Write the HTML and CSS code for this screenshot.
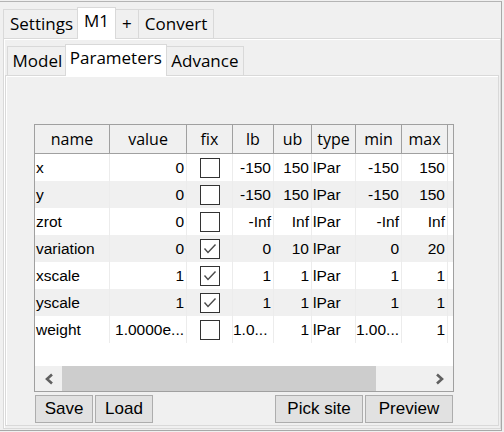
FILE: index.html
```html
<!DOCTYPE html>
<html>
<head>
<meta charset="utf-8">
<link rel="stylesheet" href="styles.css">
</head>
<body>
<div class="frame">
  <div class="tabbar">
    <div class="tab">Settings</div>
    <div class="tab sel">M1</div>
    <div class="tab">+</div>
    <div class="tab">Convert</div>
  </div>
  <div class="panel">
    <div class="tabbar inner">
      <div class="tab">Model</div>
      <div class="tab sel">Parameters</div>
      <div class="tab">Advance</div>
    </div>
    <div class="pane">
      <div class="table">
        <div class="row head">
          <div class="c">name</div><div class="c">value</div><div class="c">fix</div><div class="c">lb</div><div class="c">ub</div><div class="c">type</div><div class="c">min</div><div class="c">max</div><div class="c"></div>
        </div>
        <div class="row">
          <div class="c l">x</div><div class="c r">0</div><div class="c"><span class="cb"></span></div><div class="c r">-150</div><div class="c r">150</div><div class="c l">lPar</div><div class="c r">-150</div><div class="c r">150</div><div class="c"></div>
        </div>
        <div class="row alt">
          <div class="c l">y</div><div class="c r">0</div><div class="c"><span class="cb"></span></div><div class="c r">-150</div><div class="c r">150</div><div class="c l">lPar</div><div class="c r">-150</div><div class="c r">150</div><div class="c"></div>
        </div>
        <div class="row">
          <div class="c l">zrot</div><div class="c r">0</div><div class="c"><span class="cb"></span></div><div class="c r">-Inf</div><div class="c r">Inf</div><div class="c l">lPar</div><div class="c r">-Inf</div><div class="c r">Inf</div><div class="c"></div>
        </div>
        <div class="row alt">
          <div class="c l">variation</div><div class="c r">0</div><div class="c"><span class="cb"><svg viewBox="0 0 18 18" width="18" height="18"><polyline points="3.5,8.5 7,12.5 14.5,4.5" fill="none" stroke="#4a4a4a" stroke-width="1.4"/></svg></span></div><div class="c r">0</div><div class="c r">10</div><div class="c l">lPar</div><div class="c r">0</div><div class="c r">20</div><div class="c"></div>
        </div>
        <div class="row">
          <div class="c l">xscale</div><div class="c r">1</div><div class="c"><span class="cb"><svg viewBox="0 0 18 18" width="18" height="18"><polyline points="3.5,8.5 7,12.5 14.5,4.5" fill="none" stroke="#4a4a4a" stroke-width="1.4"/></svg></span></div><div class="c r">1</div><div class="c r">1</div><div class="c l">lPar</div><div class="c r">1</div><div class="c r">1</div><div class="c"></div>
        </div>
        <div class="row alt">
          <div class="c l">yscale</div><div class="c r">1</div><div class="c"><span class="cb"><svg viewBox="0 0 18 18" width="18" height="18"><polyline points="3.5,8.5 7,12.5 14.5,4.5" fill="none" stroke="#4a4a4a" stroke-width="1.4"/></svg></span></div><div class="c r">1</div><div class="c r">1</div><div class="c l">lPar</div><div class="c r">1</div><div class="c r">1</div><div class="c"></div>
        </div>
        <div class="row">
          <div class="c l">weight</div><div class="c r">1.0000e...</div><div class="c"><span class="cb"></span></div><div class="c l0">1.0...</div><div class="c r">1</div><div class="c l">lPar</div><div class="c r">1.00...</div><div class="c r">1</div><div class="c"></div>
        </div>
        <div class="filler"></div>
        <div class="hscroll">
          <div class="arrow"><svg viewBox="0 0 10 12" width="10" height="12"><polyline points="8,1.5 3,6 8,10.5" fill="none" stroke="#606060" stroke-width="2.6"/></svg></div>
          <div class="thumb"></div>
          <div class="trough"></div>
          <div class="arrow"><svg viewBox="0 0 10 12" width="10" height="12"><polyline points="2,1.5 7,6 2,10.5" fill="none" stroke="#606060" stroke-width="2.6"/></svg></div>
        </div>
      </div>
      <div class="buttons">
        <div class="btn small">Save</div>
        <div class="btn small">Load</div>
        <div class="spacer"></div>
        <div class="btn wide">Pick site</div>
        <div class="btn wide">Preview</div>
      </div>
    </div>
  </div>
</div>
</body>
</html>
```
FILE: styles.css
```css
html, body {
  margin: 0;
  padding: 0;
  width: 504px;
  height: 432px;
  overflow: hidden;
  background: #f0f0f0;
}

.frame {
  box-sizing: border-box;
  width: 502px;
  height: 430px;
  margin-top: 1px;
  border-top: 1px solid #b4b4b4;
  border-right: 1px solid #a8a8a8;
  border-bottom: 1px solid #a8a8a8;
  padding: 0 0 1px 3px;
  display: flex;
  flex-direction: column;
}

.tabbar {
  display: flex;
  align-items: flex-end;
  height: 36px;
  position: relative;
  z-index: 1;
  font-family: "Open Sans", "DejaVu Sans", sans-serif;
  font-size: 17px;
  color: #000;
}

.tab {
  box-sizing: border-box;
  height: 29px;
  line-height: 27px;
  padding: 0 6px;
  border: 1px solid #d9d9d9;
  border-bottom: none;
  background: #f0f0f0;
  margin-right: -1px;
}

.tab.sel {
  height: 32px;
  line-height: 26px;
  padding: 0 6px;
  background: #fff;
  margin: 0 -1px -1px -2px;
  position: relative;
  z-index: 2;
}

.panel {
  flex: 1;
  box-sizing: border-box;
  border: 1px solid #d9d9d9;
  box-shadow: inset 1px 1px 0 #fff;
  padding: 0 1px 2px 1px;
  display: flex;
  flex-direction: column;
}

.tabbar.inner {
  height: 36px;
  padding-left: 2px;
}

.tabbar.inner .tab {
  padding: 0 4.5px;
}

.tabbar.inner .tab.sel {
  padding: 0 4px;
}

.pane {
  flex: 1;
  box-sizing: border-box;
  border: 1px solid #d9d9d9;
  box-shadow: inset 1px 1px 0 #fff;
  padding: 48px 0 1px 28px;
  display: flex;
  flex-direction: column;
}

.table {
  box-sizing: border-box;
  width: 420px;
  height: 268px;
  border: 1px solid #a0a0a0;
  background: #fff;
  display: flex;
  flex-direction: column;
  font-family: "Liberation Sans", Arial, sans-serif;
  font-size: 15.5px;
  color: #000;
}

.row {
  display: grid;
  grid-template-columns: 75px 77px 46px 41px 38px 44px 46px 46px 1fr;
  height: 27px;
}

.row.alt {
  background: #f0f0f0;
}

.row .c {
  box-sizing: border-box;
  border-right: 1px solid #ececec;
  line-height: 28px;
  white-space: nowrap;
  overflow: hidden;
  display: flex;
  align-items: center;
  justify-content: center;
}

.row .c:last-child {
  border-right: none;
}

.row .c.l {
  justify-content: flex-start;
  padding-left: 1px;
}

.row .c.l0 {
  justify-content: flex-start;
  padding-left: 0;
}

.row .c.r {
  justify-content: flex-end;
  padding-right: 2px;
}

.row.head {
  height: 29px;
  background: #f0f0f0;
  border-bottom: 1px solid #a0a0a0;
  box-sizing: border-box;
  font-family: "Open Sans", "DejaVu Sans", sans-serif;
  font-size: 16px;
}

.row.head .c {
  border-right: 1px solid #a0a0a0;
  line-height: 27px;
}

.row.head .c:last-child {
  border-right: none;
}

.cb {
  box-sizing: border-box;
  width: 20px;
  height: 20px;
  border: 1px solid #333;
  background: #fff;
  display: flex;
  align-items: center;
  justify-content: center;
}

.filler {
  flex: 1;
}

.hscroll {
  height: 25px;
  display: flex;
  background: #f0f0f0;
}

.arrow {
  width: 27px;
  display: flex;
  align-items: center;
  justify-content: center;
}

.thumb {
  width: 314px;
  background: #cdcdcd;
}

.trough {
  flex: 1;
}

.buttons {
  display: flex;
  gap: 2px;
  width: 418px;
  margin: 3px 0 0 1px;
  height: 28px;
}

.spacer {
  flex: 1;
}

.btn {
  box-sizing: border-box;
  height: 28px;
  border: 1px solid #adadad;
  background: #e1e1e1;
  font-family: "Liberation Sans", Arial, sans-serif;
  font-size: 17px;
  color: #000;
  display: flex;
  align-items: center;
  justify-content: center;
}

.btn.small {
  width: 58px;
}

.btn.wide {
  width: 88px;
}
```
